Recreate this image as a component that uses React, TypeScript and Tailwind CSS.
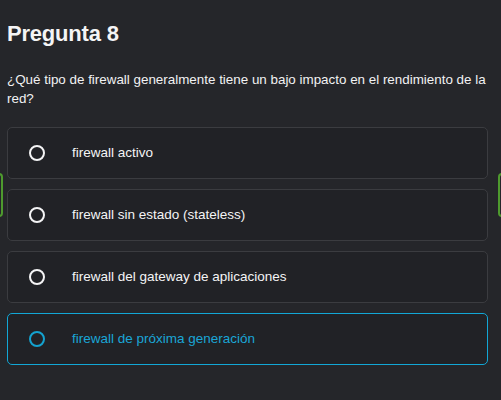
import React from 'react';

const options = [
  { id: 'a', label: 'firewall activo', selected: false },
  { id: 'b', label: 'firewall sin estado (stateless)', selected: false },
  { id: 'c', label: 'firewall del gateway de aplicaciones', selected: false },
  { id: 'd', label: 'firewall de próxima generación', selected: true },
];

export default function App() {
  return (
    <div
      className="relative w-[501px] h-[400px] overflow-hidden bg-[#25262a] text-[#f4f4f5]"
      style={{ fontFamily: '"Liberation Sans", Arial, sans-serif' }}
    >
      {/* side nav buttons, mostly off screen */}
      <div className="absolute left-[-10px] top-[173px] w-[13px] h-[44px] rounded-[4px] border-2 border-[#4e9a2e] bg-[#25262a]" />
      <div className="absolute right-[-10px] top-[173px] w-[13px] h-[44px] rounded-[4px] border-2 border-[#4e9a2e] bg-[#25262a]" />

      <div className="pl-[7px] pr-[13px] pt-[21px]">
        <h2 className="text-[22px] leading-[26px] font-bold tracking-[-0.2px]">Pregunta 8</h2>

        <p className="mt-[23px] text-[13.4px] leading-[19px] text-[#f2f2f3]">
          ¿Qué tipo de firewall generalmente tiene un bajo impacto en el rendimiento de la red?
        </p>

        <div className="mt-[19px] flex flex-col gap-[10px]">
          {options.map((opt) => (
            <div
              key={opt.id}
              className={`flex items-center h-[52px] rounded-[5px] border bg-[#212226] ${
                opt.selected ? 'border-[#12a7d6]' : 'border-[#3b3c40]'
              }`}
            >
              <span
                className={`ml-[21px] w-[16px] h-[16px] shrink-0 rounded-full border-2 ${
                  opt.selected ? 'border-[#14a3d0]' : 'border-[#f4f4f5]'
                }`}
              />
              <span
                className={`ml-[27px] text-[13.5px] ${
                  opt.selected ? 'text-[#1aa6d6]' : 'text-[#f4f4f5]'
                }`}
              >
                {opt.label}
              </span>
            </div>
          ))}
        </div>
      </div>
    </div>
  );
}
